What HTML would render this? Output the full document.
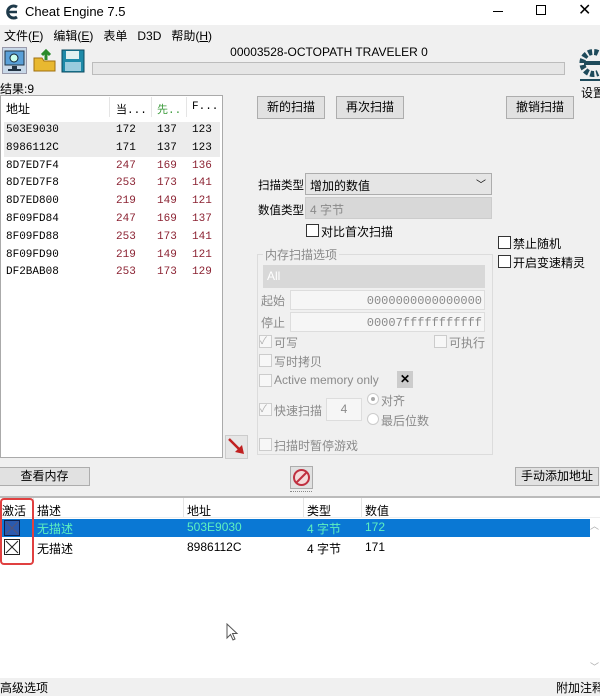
<!DOCTYPE html>
<html><head><meta charset="utf-8"><style>
*{margin:0;padding:0;box-sizing:border-box}
body{width:600px;height:693px;background:#f0f0f0;font-family:"Liberation Sans","Noto Sans CJK SC",sans-serif;font-size:12px;color:#000;position:relative;overflow:hidden}
.a{position:absolute;white-space:nowrap}
.btn{position:absolute;background:#e1e1e1;border:1px solid #adadad;text-align:center;font-size:12px}
.mono{font-family:"Liberation Mono","DejaVu Sans Mono",monospace;font-size:11px}
.cb{position:absolute;width:13px;height:13px;border:1px solid #333;background:#fff}
.cbd{position:absolute;width:13px;height:13px;border:1px solid #ccc;background:#f7f7f7}
.g{color:#8a8a8a}
.red{color:#8b2232}
</style></head><body>
<div class="a" style="left:0;top:0;width:600px;height:25px;background:#fff"></div>
<svg class="a" style="left:4px;top:4px" width="16" height="16" viewBox="0 0 16 16"><path d="M13 3A6 6 0 1 0 13 13" stroke="#1e3a4a" stroke-width="3" fill="none"/><path d="M4 8h9" stroke="#1e3a4a" stroke-width="2.5"/></svg>
<div class="a" style="left:25px;top:4px;font-size:13px">Cheat Engine 7.5</div>
<div class="a" style="left:493px;top:11px;width:10px;height:1px;background:#000"></div>
<div class="a" style="left:536px;top:5px;width:10px;height:10px;border:1px solid #000"></div>
<div class="a" style="left:578px;top:0px;font-size:16px">✕</div>
<div class="a" style="left:4px;top:27px;font-size:12px">文件(<u>F</u>)&nbsp;&nbsp; 编辑(<u>E</u>)&nbsp;&nbsp; 表单&nbsp;&nbsp; D3D&nbsp;&nbsp; 帮助(<u>H</u>)</div>
<div class="a" style="left:2px;top:47px;width:25px;height:27px;background:#c8d8e8;border:1px solid #99a"></div>
<svg class="a" style="left:4px;top:50px" width="22" height="22"><rect x="1" y="1" width="19" height="14" fill="#5aa0d8" stroke="#234"/><circle cx="10" cy="8" r="4" fill="#cfe" stroke="#123"/><rect x="8" y="16" width="5" height="3" fill="#234"/><rect x="4" y="19" width="13" height="2" fill="#234"/></svg>
<svg class="a" style="left:32px;top:48px" width="26" height="26"><path d="M2 10h8l2 3h11v10H2z" fill="#e8b830" stroke="#a07010"/><path d="M14 12V3M10 7l4-4 4 4" stroke="#2a8a2a" stroke-width="3" fill="none"/></svg>
<svg class="a" style="left:60px;top:48px" width="26" height="26"><rect x="2" y="2" width="22" height="22" fill="#1e8aa8" stroke="#0a4a60"/><rect x="6" y="3" width="13" height="8" fill="#e0f0f0"/><rect x="5" y="14" width="16" height="9" fill="#9cd"/></svg>
<div class="a" style="left:92px;top:45px;width:474px;text-align:center;font-size:12px">00003528-OCTOPATH TRAVELER 0</div>
<div class="a" style="left:92px;top:62px;width:473px;height:13px;background:#e6e6e6;border:1px solid #bcbcbc"></div>
<svg class="a" style="left:578px;top:45px" width="22" height="40"><path d="M20 8A11 11 0 1 0 20 28" stroke="#1e4a5a" stroke-width="6" fill="none" stroke-dasharray="4 2"/><path d="M6 18h16" stroke="#1e4a5a" stroke-width="4"/><rect x="2" y="34" width="20" height="2" fill="#1e4a5a"/></svg>
<div class="a" style="left:581px;top:84px;font-size:12px">设置</div>
<div class="a" style="left:0;top:80px;font-size:12px">结果:9</div>
<div class="a" style="left:0;top:95px;width:223px;height:363px;background:#fff;border:1px solid #aaa"></div>
<div class="a" style="left:4px;top:122px;width:216px;height:35px;background:#ececec"></div>
<div class="a" style="left:109px;top:97px;width:1px;height:20px;background:#e5e5e5"></div>
<div class="a" style="left:151px;top:97px;width:1px;height:20px;background:#e5e5e5"></div>
<div class="a" style="left:186px;top:97px;width:1px;height:20px;background:#e5e5e5"></div>
<div class="a" style="left:6px;top:100px">地址</div>
<div class="a mono" style="left:116px;top:101px">当...</div>
<div class="a mono" style="left:157px;top:101px;color:#3a9a3a">先..</div>
<div class="a mono" style="left:192px;top:101px">F...</div>
<div class="a mono" style="left:6px;top:122px;line-height:17.8px">503E9030<br>8986112C<br>8D7ED7F4<br>8D7ED7F8<br>8D7ED800<br>8F09FD84<br>8F09FD88<br>8F09FD90<br>DF2BAB08</div>
<div class="a mono" style="left:116px;top:122px;line-height:17.8px">172<br>171<br><span class="red">247<br>253<br>219<br>247<br>253<br>219<br>253</span></div>
<div class="a mono" style="left:157px;top:122px;line-height:17.8px">137<br>137<br><span class="red">169<br>173<br>149<br>169<br>173<br>149<br>173</span></div>
<div class="a mono" style="left:192px;top:122px;line-height:17.8px">123<br>123<br><span class="red">136<br>141<br>121<br>137<br>141<br>121<br>129</span></div>
<div class="btn" style="left:257px;top:96px;width:68px;height:23px;line-height:21px">新的扫描</div>
<div class="btn" style="left:336px;top:96px;width:68px;height:23px;line-height:21px">再次扫描</div>
<div class="btn" style="left:506px;top:96px;width:68px;height:23px;line-height:21px">撤销扫描</div>
<div class="a" style="left:258px;top:177px;font-size:11.5px">扫描类型</div>
<div class="a" style="left:305px;top:173px;width:187px;height:22px;background:#e5e5e5;border:1px solid #adadad;padding:3px 4px">增加的数值<span style="position:absolute;right:5px;top:2px;font-size:10px">﹀</span></div>
<div class="a" style="left:258px;top:202px;font-size:11.5px">数值类型</div>
<div class="a g" style="left:305px;top:197px;width:187px;height:22px;background:#d8d8d8;border:1px solid #ccc;padding:3px 4px">4 字节</div>
<div class="cb" style="left:306px;top:224px"></div>
<div class="a" style="left:321px;top:223px">对比首次扫描</div>
<div class="cb" style="left:498px;top:236px"></div><div class="a" style="left:513px;top:235px">禁止随机</div>
<div class="cb" style="left:498px;top:255px"></div><div class="a" style="left:513px;top:254px">开启变速精灵</div>
<div class="a" style="left:257px;top:254px;width:236px;height:201px;border:1px solid #dcdcdc"></div>
<div class="a g" style="left:263px;top:246px;background:#f0f0f0;padding:0 2px">内存扫描选项</div>
<div class="a" style="left:263px;top:265px;width:222px;height:23px;background:#d8d8d8;color:#fff;padding:4px 4px">All</div>
<div class="a g" style="left:261px;top:292px">起始</div>
<div class="a g mono" style="left:290px;top:290px;width:195px;height:20px;background:#f6f6f6;border:1px solid #ddd;text-align:right;padding:3px 2px;font-size:12px">0000000000000000</div>
<div class="a g" style="left:261px;top:314px">停止</div>
<div class="a g mono" style="left:290px;top:312px;width:195px;height:20px;background:#f6f6f6;border:1px solid #ddd;text-align:right;padding:3px 2px;font-size:12px">00007fffffffffff</div>
<div class="cbd" style="left:259px;top:335px;font-size:10px;color:#aaa;line-height:11px">✓</div><div class="a g" style="left:274px;top:334px">可写</div>
<div class="cbd" style="left:434px;top:335px"></div><div class="a g" style="left:449px;top:334px">可执行</div>
<div class="cbd" style="left:259px;top:354px"></div><div class="a g" style="left:274px;top:353px">写时拷贝</div>
<div class="cbd" style="left:259px;top:374px"></div><div class="a g" style="left:274px;top:373px;font-size:12px">Active memory only</div>
<div class="a" style="left:397px;top:371px;width:16px;height:17px;background:#ccc;text-align:center;font-weight:bold;line-height:17px">✕</div>
<div class="cbd" style="left:259px;top:403px;font-size:10px;color:#aaa;line-height:11px">✓</div><div class="a g" style="left:274px;top:402px">快速扫描</div>
<div class="a g" style="left:326px;top:398px;width:36px;height:23px;border:1px solid #ddd;background:#f6f6f6;text-align:center;line-height:21px">4</div>
<div class="a" style="left:367px;top:393px;width:12px;height:12px;border:1px solid #ccc;border-radius:50%;background:#fff"><div style="margin:3px;width:4px;height:4px;border-radius:50%;background:#aaa"></div></div>
<div class="a g" style="left:381px;top:392px">对齐</div>
<div class="a" style="left:367px;top:413px;width:12px;height:12px;border:1px solid #ccc;border-radius:50%;background:#fff"></div>
<div class="a g" style="left:381px;top:412px">最后位数</div>
<div class="cbd" style="left:259px;top:438px"></div><div class="a g" style="left:274px;top:437px">扫描时暂停游戏</div>
<div class="a" style="left:225px;top:435px;width:23px;height:24px;background:#e6e6e6;border:1px solid #ccc"></div>
<svg class="a" style="left:227px;top:437px" width="20" height="20"><path d="M2 2L15 15" stroke="#c02020" stroke-width="2.5"/><path d="M17 17L8 15L15 8Z" fill="#c02020"/></svg>
<div class="btn" style="left:-1px;top:467px;width:91px;height:19px;line-height:17px">查看内存</div>
<div class="a" style="left:290px;top:466px;width:23px;height:23px;background:#e1e1e1;border:1px solid #adadad"></div>
<svg class="a" style="left:292px;top:468px" width="19" height="19"><circle cx="9.5" cy="9.5" r="7.5" fill="#f4dada" stroke="#c03040" stroke-width="2"/><path d="M4.5 14.5L14.5 4.5" stroke="#c03040" stroke-width="2"/></svg>
<div class="btn" style="left:515px;top:467px;width:84px;height:19px;line-height:17px">手动添加地址</div>
<div class="a" style="left:290px;top:491px;width:22px;height:2px;border-top:1px dotted #888"></div>
<div class="a" style="left:0;top:496px;width:600px;height:182px;background:#fff;border-top:2px solid #bbb"></div>
<div class="a" style="left:0;top:517px;width:600px;height:1px;background:#eee"></div>
<div class="a" style="left:2px;top:502px">激活</div>
<div class="a" style="left:37px;top:502px">描述</div>
<div class="a" style="left:187px;top:502px">地址</div>
<div class="a" style="left:307px;top:502px">类型</div>
<div class="a" style="left:365px;top:502px">数值</div>
<div class="a" style="left:33px;top:498px;width:1px;height:19px;background:#e5e5e5"></div>
<div class="a" style="left:183px;top:498px;width:1px;height:19px;background:#e5e5e5"></div>
<div class="a" style="left:303px;top:498px;width:1px;height:19px;background:#e5e5e5"></div>
<div class="a" style="left:361px;top:498px;width:1px;height:19px;background:#e5e5e5"></div>
<div class="a" style="left:0;top:519px;width:590px;height:18px;background:#0a78d4"></div>
<div class="a" style="left:4px;top:520px;width:16px;height:16px;border:1px solid #0a2050;background:#2a5ab0"></div>
<svg class="a" style="left:4px;top:520px" width="16" height="16"><path d="M2 2L14 14M14 2L2 14" stroke="#557" stroke-width="1"/></svg>
<div class="a" style="left:37px;top:520px;color:#5ef0c0">无描述</div>
<div class="a" style="left:187px;top:520px;color:#5ef0c0">503E9030</div>
<div class="a" style="left:307px;top:520px;color:#5ef0c0">4 字节</div>
<div class="a" style="left:365px;top:520px;color:#5ef0c0">172</div>
<div class="a" style="left:4px;top:539px;width:16px;height:16px;border:1px solid #222;background:#fff"></div>
<svg class="a" style="left:4px;top:539px" width="16" height="16"><path d="M2 2L14 14M14 2L2 14" stroke="#222" stroke-width="1"/></svg>
<div class="a" style="left:37px;top:540px">无描述</div>
<div class="a" style="left:187px;top:540px">8986112C</div>
<div class="a" style="left:307px;top:540px">4 字节</div>
<div class="a" style="left:365px;top:540px">171</div>
<div class="a" style="left:0;top:498px;width:34px;height:67px;border:2px solid #e04040;border-radius:4px"></div>
<div class="a" style="left:590px;top:519px;font-size:9px;color:#aaa">︿</div>
<div class="a" style="left:590px;top:660px;font-size:9px;color:#aaa">﹀</div>
<svg class="a" style="left:226px;top:623px" width="14" height="20"><path d="M1 1V15L4.5 11.5L7 17L9 16L6.5 10.5H11Z" fill="#fff" stroke="#555"/></svg>
<div class="a" style="left:0;top:679px">高级选项</div>
<div class="a" style="left:556px;top:679px">附加注释</div>
</body></html>
